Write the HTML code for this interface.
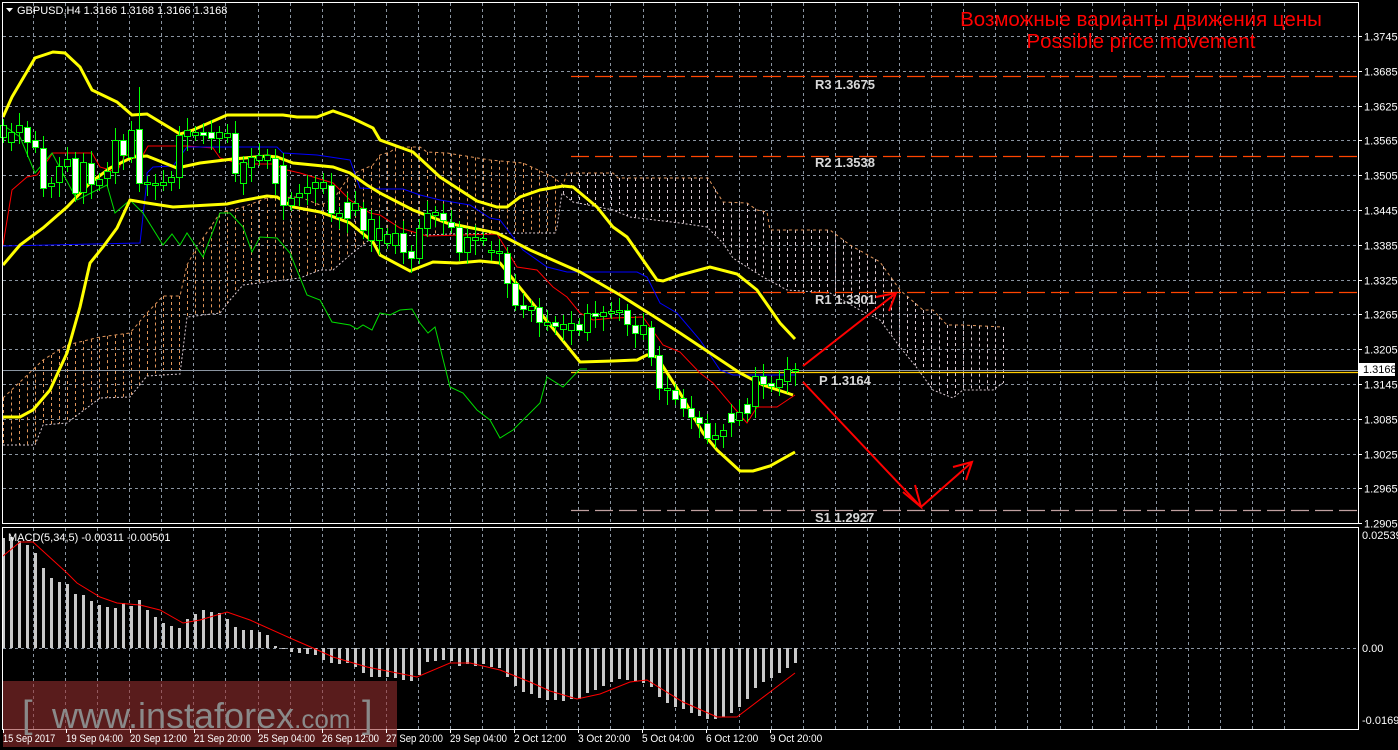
<!DOCTYPE html>
<html><head><meta charset="utf-8"><style>
html,body{margin:0;padding:0;background:#000;width:1398px;height:750px;overflow:hidden}
svg{display:block}
text{font-family:"Liberation Sans",sans-serif}
</style></head><body>
<svg id="s" width="1398" height="750" xmlns="http://www.w3.org/2000/svg">
<rect width="1398" height="750" fill="#000"/>
<g id="grid" stroke="#8a94a0" stroke-width="1" stroke-dasharray="3,3"></g>
<g id="cloud" stroke-width="1" stroke-dasharray="3,3" fill="none"></g>
<g id="levels"></g>
<g id="lines" fill="none"></g>
<g id="candles"></g>
<g id="macd"></g>
<rect x="2.5" y="2.5" width="1356" height="521" fill="none" stroke="#fff" stroke-width="1"/>
<rect x="2.5" y="527.5" width="1356" height="202" fill="none" stroke="#fff" stroke-width="1"/>
<polygon points="6,8 13,8 9.5,12" fill="#fff"/>
<text x="17" y="14" font-size="11" fill="#fff">GBPUSD,H4  1.3166 1.3168 1.3166 1.3168</text>
<text x="1141" y="26" font-size="20.5" fill="#ff0000" text-anchor="middle">Возможные варианты движения цены</text>
<text x="1141" y="48" font-size="20.5" fill="#ff0000" text-anchor="middle">Possible price movement</text>
<g font-family="Liberation Mono,monospace" font-weight="bold" font-size="13" fill="#d8d8d8">
<text x="815" y="89">R3 1.3675</text>
<text x="815" y="167">R2 1.3538</text>
<text x="815" y="304">R1 1.3301</text>
<text x="819" y="385">P 1.3164</text>
<text x="815" y="522">S1 1.2927</text>
</g>
<g stroke="#ff0000" stroke-width="2" fill="none">
<line x1="803" y1="366" x2="895" y2="294"/>
<polyline points="876,297 896,293 889,311"/>
<line x1="803" y1="382" x2="921" y2="507"/>
<polyline points="903,492 921,507 915,485"/>
<line x1="921" y1="507" x2="971" y2="463"/>
<polyline points="953,467 972,462 966,480"/>
</g>
<rect x="3" y="681" width="394" height="66" fill="#9a3030" opacity="0.58"/>
<text x="22" y="727" font-size="38" fill="#8a8a8a">[</text>
<text x="52" y="728" font-size="36" fill="#8a8a8a">www.instaforex<tspan font-size="26">.com</tspan></text>
<text x="362" y="727" font-size="38" fill="#8a8a8a">]</text>
<g id="axis" font-size="11" fill="#fff"></g>
<rect x="1359" y="363" width="36" height="13" fill="#fff"/>
<text x="1363" y="373" font-size="11" fill="#000">1.3168</text>
<text x="8" y="541" font-size="11" fill="#fff">MACD(5,34,5) -0.00311 -0.00501</text>
</svg>
<script>
var NS="http://www.w3.org/2000/svg";
function el(p,t,a){var e=document.createElementNS(NS,t);for(var k in a)e.setAttribute(k,a[k]);document.getElementById(p).appendChild(e);return e;}
for(var i=0;i<40;i++){var x=Math.round(33+i*32.08)+0.5;if(x>1356)break;
 el('grid','line',{x1:x,y1:3,x2:x,y2:523});el('grid','line',{x1:x,y1:528,x2:x,y2:729});}
var labs=["1.3745","1.3685","1.3625","1.3565","1.3505","1.3445","1.3385","1.3325","1.3265","1.3205","1.3145","1.3085","1.3025","1.2965","1.2905"];
for(var i=0;i<15;i++){var y=Math.round(36+i*34.8)+0.5;if(y<523)el('grid','line',{x1:3,y1:y,x2:1358,y2:y});
 el('axis','line',{x1:1358,y1:y,x2:1362,y2:y,stroke:'#fff'});
 var t=el('axis','text',{x:1364,y:y+4});t.textContent=labs[i];}
el('grid','line',{x1:3,y1:648.5,x2:1358,y2:648.5});
[["0.02539",539],["0.00",652],["-0.01694",724]].forEach(function(a){var t=el('axis','text',{x:1362,y:a[1]});t.textContent=a[0];});
var times=[["15 Sep 2017",3],["19 Sep 04:00",66],["20 Sep 12:00",130],["21 Sep 20:00",194],["25 Sep 04:00",258],["26 Sep 12:00",322],["27 Sep 20:00",386],["29 Sep 04:00",450],["2 Oct 12:00",514],["3 Oct 20:00",578],["5 Oct 04:00",642],["6 Oct 12:00",706],["9 Oct 20:00",770]];
times.forEach(function(a){var t=el('axis','text',{x:a[1],y:742,textLength:a[0].length*4.75,lengthAdjust:'spacingAndGlyphs'});t.textContent=a[0];el('axis','line',{x1:a[1]+0.5,y1:729,x2:a[1]+0.5,y2:733,stroke:'#fff'});});
function interp(pts,x){for(var i=0;i<pts.length-2;i+=2){if(x>=pts[i]&&x<=pts[i+2]){var f=(x-pts[i])/(pts[i+2]-pts[i]||1);return pts[i+1]+f*(pts[i+3]-pts[i+1]);}}return null;}
var ctop=[3,398,20,382,43,360,67,345,100,337,130,333,147,313,163,296,180,296,187,265,197,247,220,213,243,207,267,198,300,197,320,205,333,200,350,175,373,165,380,155,390,152,397,147,420,147,427,152,447,153,490,160,523,163,553,177,563,185,567,173,613,173,618,178,708,178,723,202,747,203,757,210,767,212,770,230,830,230,850,245,880,262,900,290,923,310,933,310,947,325,963,325,1003,327];
var cbot=[3,445,20,445,35,445,43,425,67,423,100,398,130,397,147,376,180,374,187,317,220,313,230,300,243,285,267,282,300,278,320,270,333,270,350,255,373,237,400,236,450,234,530,233,555,233,557,227,562,193,573,202,613,210,630,217,680,223,707,227,713,233,723,243,733,258,747,267,763,277,787,290,830,293,860,310,880,320,900,347,917,368,933,390,953,398,963,390,993,390,1003,383];
for(var x=3;x<=1003;x+=8){var a=interp(ctop,x),b=interp(cbot,x);if(a==null||b==null)continue;
 el('cloud','line',{x1:x+0.5,y1:a,x2:x+0.5,y2:b,stroke:x<560?'#e0955a':'#d8c8d0'});}
function pl(g,pts,col,w,dash){var s='';for(var i=0;i<pts.length;i+=2)s+=pts[i]+','+pts[i+1]+' ';var a={points:s,stroke:col,'stroke-width':w,fill:'none'};if(dash)a['stroke-dasharray']=dash;return el(g,'polyline',a);}
pl('cloud',ctop,'#e0955a',1,'3,3');pl('cloud',cbot,'#d8c8d0',1,'2,2');
el('levels','line',{x1:3,y1:370.5,x2:1358,y2:370.5,stroke:'#8a94a0','stroke-width':1});
[[76,'#ff4500'],[156,'#ff4500'],[292,'#ff4500'],[510,'#c0a0a0']].forEach(function(l){el('levels','line',{x1:571,y1:l[0]+0.5,x2:1358,y2:l[0]+0.5,stroke:l[1],'stroke-width':1.3,'stroke-dasharray':'18,6'});});
el('levels','line',{x1:571,y1:372.5,x2:1358,y2:372.5,stroke:'#ffcc00','stroke-width':1.3});
pl('lines',[3,245,12,190,27,177,37,175,53,153,92,153,100,167,117,172,125,155,143,155,148,146,187,146,213,148,220,158,240,164,273,164,287,170,300,173,333,183,350,200,370,213,380,215,400,228,427,236,497,234,517,267,537,270,553,287,567,297,580,313,593,320,613,318,643,317,663,345,680,352,700,373,713,383,747,423,757,407,777,407,795,395],'#ff0000',1);
pl('lines',[3,246,140,243,147,180,147,173,153,167,173,166,187,147,277,147,283,153,317,155,350,160,360,188,380,189,403,189,420,195,440,200,470,205,490,218,500,220,523,250,547,267,567,272,637,272,647,277,660,303,677,313,700,340,720,370,733,375,795,375],'#0000ff',1);
pl('lines',[3,125,20,137,35,173,52,153,77,200,107,185,115,213,130,200,143,213,163,245,172,234,180,245,187,233,203,257,220,213,230,213,243,227,252,252,260,237,277,238,290,253,307,295,320,300,332,322,350,325,357,329,363,325,372,330,380,313,390,315,400,310,412,309,420,323,428,333,435,327,450,387,463,393,477,410,490,420,500,438,513,430,540,403,547,377,563,387,580,369,587,369],'#00dd00',1);
var Y='#ffff00';
pl('lines',[3,117,12,97,35,58,53,52,65,53,80,67,92,90,117,102,132,115,147,114,180,134,193,130,227,115,283,115,297,117,317,117,333,111,350,117,373,128,380,140,413,152,440,177,477,201,497,207,507,207,520,197,540,190,563,186,573,187,597,207,613,227,627,237,657,280,663,281,680,275,710,267,737,274,757,290,780,323,795,339],Y,3);
pl('lines',[3,265,20,245,43,228,67,207,90,183,110,168,133,157,147,156,177,168,200,163,233,159,267,156,277,157,293,163,333,167,350,173,367,185,380,193,413,210,447,223,497,233,530,250,580,272,620,295,647,312,680,333,713,355,740,373,763,385,793,395],Y,3);
pl('lines',[3,417,20,417,33,410,50,390,67,353,80,307,90,263,103,247,117,228,130,200,147,203,173,207,227,204,240,201,267,196,277,197,293,207,320,212,350,223,373,242,380,255,410,271,433,262,457,263,480,261,500,263,580,362,613,361,637,360,647,355,657,357,680,393,703,433,717,450,740,471,753,471,770,466,795,452],Y,3);
var C=[[3,125,137,0],[11,132,142,0],[19,125,132,0],[27,127,142,1],[35,140,147,1],[43,148,188,1],[51,183,186,0],[59,166,182,0],[67,159,166,0],[75,158,193,1],[83,162,192,0],[91,163,184,1],[99,179,185,0],[107,171,178,0],[115,140,172,0],[123,140,155,1],[131,130,157,0],[139,129,183,1,87],[147,182,184,0],[155,183,185,0],[163,182,185,0],[171,177,182,0],[179,135,177,0],[187,130,136,0],[195,132,135,0],[203,132,135,1],[211,132,138,1],[219,132,138,0],[227,133,137,0],[235,133,173,1],[243,162,183,0],[251,157,167,0],[259,155,160,0],[267,155,160,0],[275,158,183,1],[283,165,205,1],[291,198,205,0],[299,193,197,0],[307,187,193,0],[315,182,188,0],[323,182,188,0],[331,185,213,1],[339,213,217,0],[347,202,218,1],[355,203,210,0],[363,208,230,1],[371,219,240,0],[379,228,240,0],[387,234,243,0],[395,233,245,0],[403,233,252,1],[411,251,258,1],[419,228,258,0],[427,213,228,0],[435,212,215,0],[443,213,220,1],[451,222,227,1],[459,227,252,1],[467,237,252,0],[475,237,240,0],[483,238,240,0],[491,250,252,0],[499,251,253,0],[507,253,283,1],[515,283,305,1],[523,305,309,1],[531,306,310,0],[539,307,322,1],[547,322,325,0],[555,322,326,1],[563,324,329,0],[571,323,330,0],[579,324,330,1],[587,313,332,0],[595,313,316,1],[603,312,316,0],[611,311,313,0],[619,310,312,0],[627,310,324,1],[635,325,333,1],[643,325,334,0],[651,327,357,1],[659,355,388,1],[667,388,390,0],[675,390,399,1],[683,398,408,1],[691,408,417,1],[699,417,423,1],[707,423,438,1],[715,435,439,0],[723,430,436,0],[731,413,422,1],[739,412,420,0],[747,404,413,1],[755,376,406,0],[763,376,384,1],[771,383,386,1],[779,379,387,0],[787,369,381,0],[795,369,371,0]];
C.forEach(function(c,i){var x=c[0]+0.5,wt=c[4]||c[1]-6-(i%3)*3,wb=c[2]+6+(i%4)*3;
 el('candles','line',{x1:x,y1:wt,x2:x,y2:wb,stroke:'#00ff00','stroke-width':1});
 el('candles','rect',{x:c[0]-2.5,y:c[1]+0.5,width:6,height:Math.max(1,c[2]-c[1]),fill:c[3]?'#fff':'#000',stroke:'#00ff00','stroke-width':1});});
var M=[538,537,541,545,553,568,578,582,584,594,595,601,605,607,608,603,606,600,610,617,623,626,628,619,614,610,612,613,619,627,630,630,632,635,646,648,652,653,654,655,660,663,664,663,667,673,677,677,677,678,680,681,675,662,661,660,661,666,664,666,664,667,668,677,686,692,694,698,700,700,701,699,699,693,690,686,682,679,680,681,683,687,697,703,707,709,713,716,719,719,717,713,707,699,688,682,678,673,668,663];
M.forEach(function(v,i){var x=2+i*8,y0=648;el('macd','rect',{x:x,y:Math.min(v,y0),width:3,height:Math.max(1,Math.abs(v-y0)),fill:'#c8c8c8'});});
pl('macd',[3,556,20,542,33,542,67,573,77,583,100,597,117,603,140,605,160,610,183,623,200,620,227,612,250,620,290,638,313,648,333,657,367,667,417,677,450,663,470,663,500,670,530,682,550,691,577,699,600,694,630,682,647,680,683,702,717,717,737,717,770,692,795,673],'#ff0000',1);
</script>
</body></html>
